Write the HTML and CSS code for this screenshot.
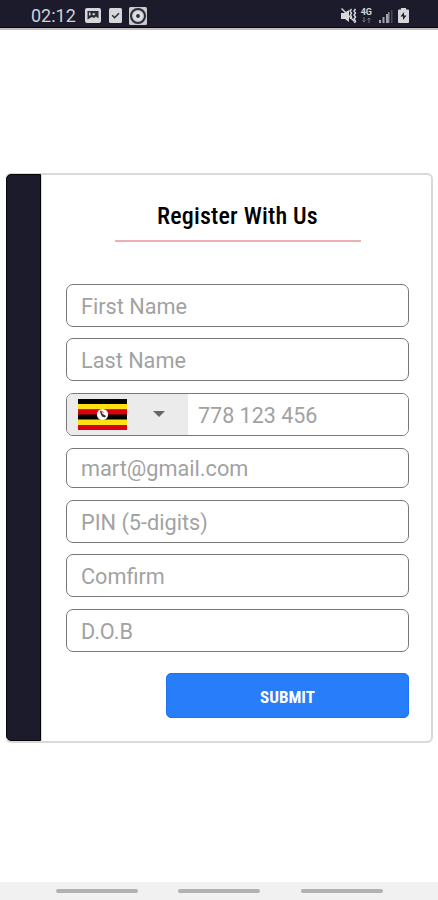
FILE: index.html
```html
<!DOCTYPE html>
<html lang="en">
<head>
  <meta charset="UTF-8">
  <meta name="viewport" content="width=device-width, initial-scale=1.0">
  <title>Register With Us</title>
  <link rel="stylesheet" href="styles.css">
</head>
<body>
  <header class="status-bar">
    <div class="status-left">
      <span class="clock">02:12</span>
      <svg class="icon-image" width="16" height="15" viewBox="0 0 16 15">
        <rect width="16" height="15" rx="2" fill="#d6d6db"/>
        <path d="M2.500 3h11v7.500l-2.500-2-2 1.500-2-1-4.500 2.500z" fill="#2b2b38"/>
        <path d="M4 4.500h1.500v3H4zM7 6l2-1 1.500 1-2 1.500z" fill="#d6d6db"/>
      </svg>
      <svg class="icon-check" width="13" height="15" viewBox="0 0 13 15">
        <rect width="13" height="15" rx="1.500" fill="#d6d6db"/>
        <path d="M3.200 7.300l2.400 2.400 4.400-4.400" fill="none" stroke="#2b2b38" stroke-width="1.600"/>
      </svg>
      <svg class="icon-disc" width="18" height="18" viewBox="0 0 18 18">
        <rect width="18" height="18" rx="1.500" fill="#c9c9ce"/>
        <circle cx="9" cy="9" r="7" fill="none" stroke="#2b2b38" stroke-width="2"/>
        <circle cx="9" cy="9" r="4.800" fill="#dedee2"/>
        <circle cx="9" cy="9" r="1.900" fill="#2b2b38"/>
      </svg>
    </div>
    <div class="status-right">
      <svg width="17" height="16" viewBox="0 0 17 16">
        <path d="M1 5h3l5-3v12l-4-3H1z" fill="#d6d6db"/>
        <path d="M1.500 .5l13 13" stroke="#d6d6db" stroke-width="1.400"/>
        <path d="M11.500 1l-1.500 2 1.500 2-1 2 1 2-1 2M15.500 1l-1.500 2 1.500 2-1.500 2 1.500 2-1.500 2 1.500 2-1 2" fill="none" stroke="#d6d6db" stroke-width="1.500"/>
      </svg>
      <div class="network">
        <span>4G</span>
        <svg width="9" height="6" viewBox="0 0 9 6">
          <path d="M2 0v5M.5 3.500L2 5l1.500-1.500M7 6V1M5.500 2.500L7 1l1.500 1.500" fill="none" stroke="#777783" stroke-width="1"/>
        </svg>
      </div>
      <svg class="icon-signal" width="14" height="14" viewBox="0 0 14 14">
        <path d="M0 11h2v3H0zM3.500 8h2v6h-2zM7 5h2v9H7z" fill="#a3a3ab"/>
        <path d="M9 3h1.500v11H9z" fill="#8b8b95"/>
        <path d="M12 1h1.500v13H12z" fill="#4b4b58"/>
      </svg>
      <svg class="icon-battery" width="11" height="15" viewBox="0 0 11 15">
        <path d="M3 0h5v1.500h2a1 1 0 0 1 1 1V14a1 1 0 0 1-1 1H1a1 1 0 0 1-1-1V2.500a1 1 0 0 1 1-1h2z" fill="#d6d6db"/>
        <path d="M6 4L2.500 8.500H5V12l3.500-4.500H6z" fill="#1b1b2b"/>
      </svg>
    </div>
  </header>

  <main>
    <div class="card">
      <div class="side"></div>
      <form class="register-form">
        <h1>Register With Us</h1>
        <input type="text" placeholder="First Name">
        <input type="text" placeholder="Last Name">
        <div class="phone">
          <div class="country">
            <svg class="flag" width="49" height="31" viewBox="0 0 49 31">
              <rect width="49" height="31" fill="#000"/>
              <rect y="5" width="49" height="5.500" fill="#ffe010"/>
              <rect y="10.500" width="49" height="5" fill="#d8000c"/>
              <rect y="20.500" width="49" height="5.500" fill="#ffe010"/>
              <rect y="26" width="49" height="5" fill="#d8000c"/>
              <circle cx="24.500" cy="15.500" r="5.600" fill="#fff"/>
              <path d="M22 12l1.500-.5.5 3 4 2.500-1 1.500-3-1-1.500-3z" fill="#333"/>
              <path d="M24 12l1.500 1-.5 1.500z" fill="#d8000c"/>
            </svg>
            <span class="arrow"></span>
          </div>
          <input type="tel" placeholder="778 123 456">
        </div>
        <input class="email" type="email" placeholder="mart@gmail.com">
        <input type="password" placeholder="PIN (5-digits)">
        <input type="password" placeholder="Comfirm">
        <input type="text" placeholder="D.O.B">
        <button type="submit">SUBMIT</button>
      </form>
    </div>
  </main>

  <nav class="nav-bar">
    <span></span>
    <span></span>
    <span></span>
  </nav>
</body>
</html>
```

FILE: styles.css
```css
* {
  margin: 0;
  padding: 0;
  box-sizing: border-box;
}
body {
  font-family: Roboto, sans-serif;
  background-color: #fff;
  display: flex;
  flex-direction: column;
  height: 100vh;
  overflow: hidden;
}
.status-bar {
  height: 30px;
  flex-shrink: 0;
  background: #1b1b2b;
  border-bottom: 2px solid #c4bfbc;
  box-shadow: inset 0 -1px 0 #08080c;
  display: flex;
  justify-content: space-between;
  align-items: center;
  padding: 3px 29px 0 31px;
}
.status-left,
.status-right {
  display: flex;
  align-items: center;
}
.clock {
  color: #d0d0d6;
  font-size: 18px;
  width: 54px;
}
.icon-check {
  margin: 0 7px 0 8px;
}
.network {
  display: flex;
  flex-direction: column;
  align-items: center;
  color: #d6d6db;
  font-size: 9px;
  font-weight: 700;
  line-height: 9px;
  margin: 0 7px 0 4px;
}
.icon-battery {
  margin-left: 5px;
}
main {
  flex: 1;
  padding: 143px 5px 0 5px;
}
.card {
  display: flex;
  height: 570px;
  border: 2px solid #d9d9d9;
  border-radius: 6px;
  border-left: none;
}
.side {
  width: 35px;
  margin: -1px 0 0 1px;
  background: #1b1b2b;
  border: 1px solid #05050a;
  border-radius: 5px 0 0 5px;
  box-shadow: 1px 0 0 #d9d9d9;
}
.register-form {
  flex: 1;
  display: flex;
  flex-direction: column;
  padding: 25px 22px 0 25px;
}
h1 {
  align-self: center;
  width: 246px;
  height: 42px;
  margin-bottom: 41.500px;
  border-bottom: 2px solid #efb0b4;
  color: #000;
  font-family: "Roboto Condensed", Roboto, sans-serif;
  font-stretch: condensed;
  font-size: 24px;
  font-weight: 500;
  letter-spacing: 0.2px;
  line-height: 32px;
  text-align: center;
}
input {
  width: 100%;
  height: 43px;
  flex-shrink: 0;
  margin-bottom: 11.500px;
  padding: 2px 14px 0;
  border: 1px solid #777;
  border-radius: 7px;
  background: #fff;
  font-family: inherit;
  font-size: 21.700px;
}
input::placeholder {
  color: #a2a2a2;
}
.phone {
  display: flex;
  height: 43px;
  margin-bottom: 12px;
  border: 1px solid #777;
  border-radius: 7px;
  overflow: hidden;
}
.country {
  width: 121px;
  flex-shrink: 0;
  display: flex;
  align-items: center;
  padding-left: 11px;
  background: #ebebeb;
}
.arrow {
  margin-left: 26px;
  border: 6px solid transparent;
  border-top-color: #666;
  border-bottom: none;
}
.phone input {
  flex: 1;
  min-width: 0;
  height: 41px;
  padding: 2px 10px 0;
  border: none;
  border-radius: 0;
  font-size: 21.500px;
}
.email {
  height: 40px;
  margin-bottom: 12px;
}
button {
  align-self: flex-end;
  width: 243px;
  height: 45px;
  margin-top: 10px;
  padding-top: 2px;
  border: 1px solid #1d72ee;
  border-radius: 5px;
  background: #287dfa;
  color: #fff;
  font-family: "Roboto Condensed", Roboto, sans-serif;
  font-stretch: condensed;
  font-size: 17px;
  font-weight: 700;
}
.nav-bar {
  height: 18px;
  flex-shrink: 0;
  background: #f1f1f1;
  display: flex;
  justify-content: center;
  align-items: center;
  gap: 40.500px;
}
.nav-bar span {
  width: 82px;
  height: 4px;
  border-radius: 2px;
  background: #b2b2b2;
}
```
